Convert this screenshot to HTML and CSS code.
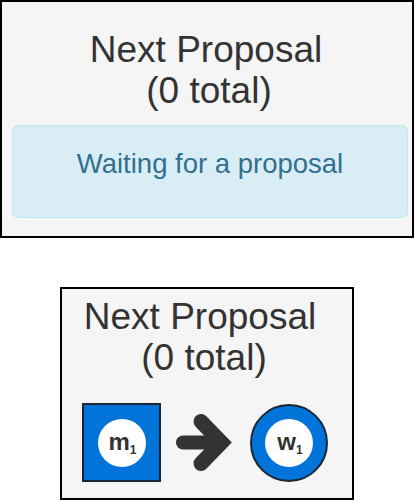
FILE: index.html
```
<!DOCTYPE html>
<html>
<head>
<meta charset="utf-8">
<link rel="stylesheet" href="styles.css">
</head>
<body>
<div class="panel panel-top">
  <div class="title title-top">
    <span class="line">Next Proposal</span>
    <span class="line line2">(0 total)</span>
  </div>
  <div class="alert">Waiting for a proposal</div>
</div>
<div class="panel panel-bottom">
  <div class="title title-bottom">
    <span class="line">Next Proposal</span>
    <span class="line line2">(0 total)</span>
  </div>
  <div class="pair">
    <div class="node node-man"><div class="label"><span class="txt">m<sub>1</sub></span></div></div>
    <svg class="arrow" width="56" height="57" viewBox="0 0 56 57">
      <line x1="7" y1="28.5" x2="42" y2="28.5" stroke="#333" stroke-width="14" stroke-linecap="round"/>
      <polyline points="25,7.5 45.4,28.5 25,49.5" fill="none" stroke="#333" stroke-width="15" stroke-linecap="round" stroke-linejoin="miter"/>
    </svg>
    <div class="node node-woman"><div class="label"><span class="txt">w<sub>1</sub></span></div></div>
  </div>
</div>
</body>
</html>
```
FILE: styles.css
```
html, body {
  margin: 0;
  padding: 0;
  background: #ffffff;
}
body {
  font-family: "Liberation Sans", Arial, sans-serif;
  color: #333333;
}
.panel {
  box-sizing: border-box;
  border: 2px solid #000000;
  background: #f5f5f5;
}
.panel-top {
  width: 414px;
  height: 238px;
  padding: 27px 4px 0 10px;
}
.title {
  font-size: 37px;
  line-height: 41px;
  text-align: center;
  color: #333333;
}
.line {
  display: block;
}
.title-top {
  margin-right: 8px;
}
.title-top .line2 {
  padding-left: 6px;
}
.alert {
  margin-top: 14px;
  box-sizing: border-box;
  height: 93px;
  padding-top: 18px;
  background: #d9edf7;
  border: 1px solid #bce8f1;
  border-radius: 6px;
  color: #31708f;
  font-size: 27.5px;
  line-height: 40px;
  text-align: center;
}
.panel-bottom {
  margin-top: 49px;
  margin-left: 60px;
  width: 294px;
  height: 213px;
  padding: 7px 0 0 20px;
}
.title-bottom {
  width: 236px;
}
.title-bottom .line2 {
  padding-left: 8px;
}
.pair {
  margin-top: 25px;
  display: flex;
  align-items: center;
}
.node {
  box-sizing: border-box;
  border: 2px solid #1a2633;
  background: #0074d9;
  display: flex;
  align-items: center;
  justify-content: center;
  flex: none;
}
.node-man {
  width: 79px;
  height: 79px;
}
.node-woman {
  width: 78px;
  height: 78px;
  border-radius: 50%;
  margin-left: 18px;
}
.arrow {
  display: block;
  flex: none;
  margin-left: 15px;
}
.label {
  width: 48px;
  height: 48px;
  border-radius: 50%;
  background: #ffffff;
  display: flex;
  align-items: center;
  justify-content: center;
}
.txt {
  display: block;
  font-size: 24px;
  font-weight: 700;
  color: #333333;
  line-height: 24px;
  margin-left: 2px;
}
.label sub {
  font-size: 12px;
  vertical-align: -4px;
  line-height: 1;
}
```
